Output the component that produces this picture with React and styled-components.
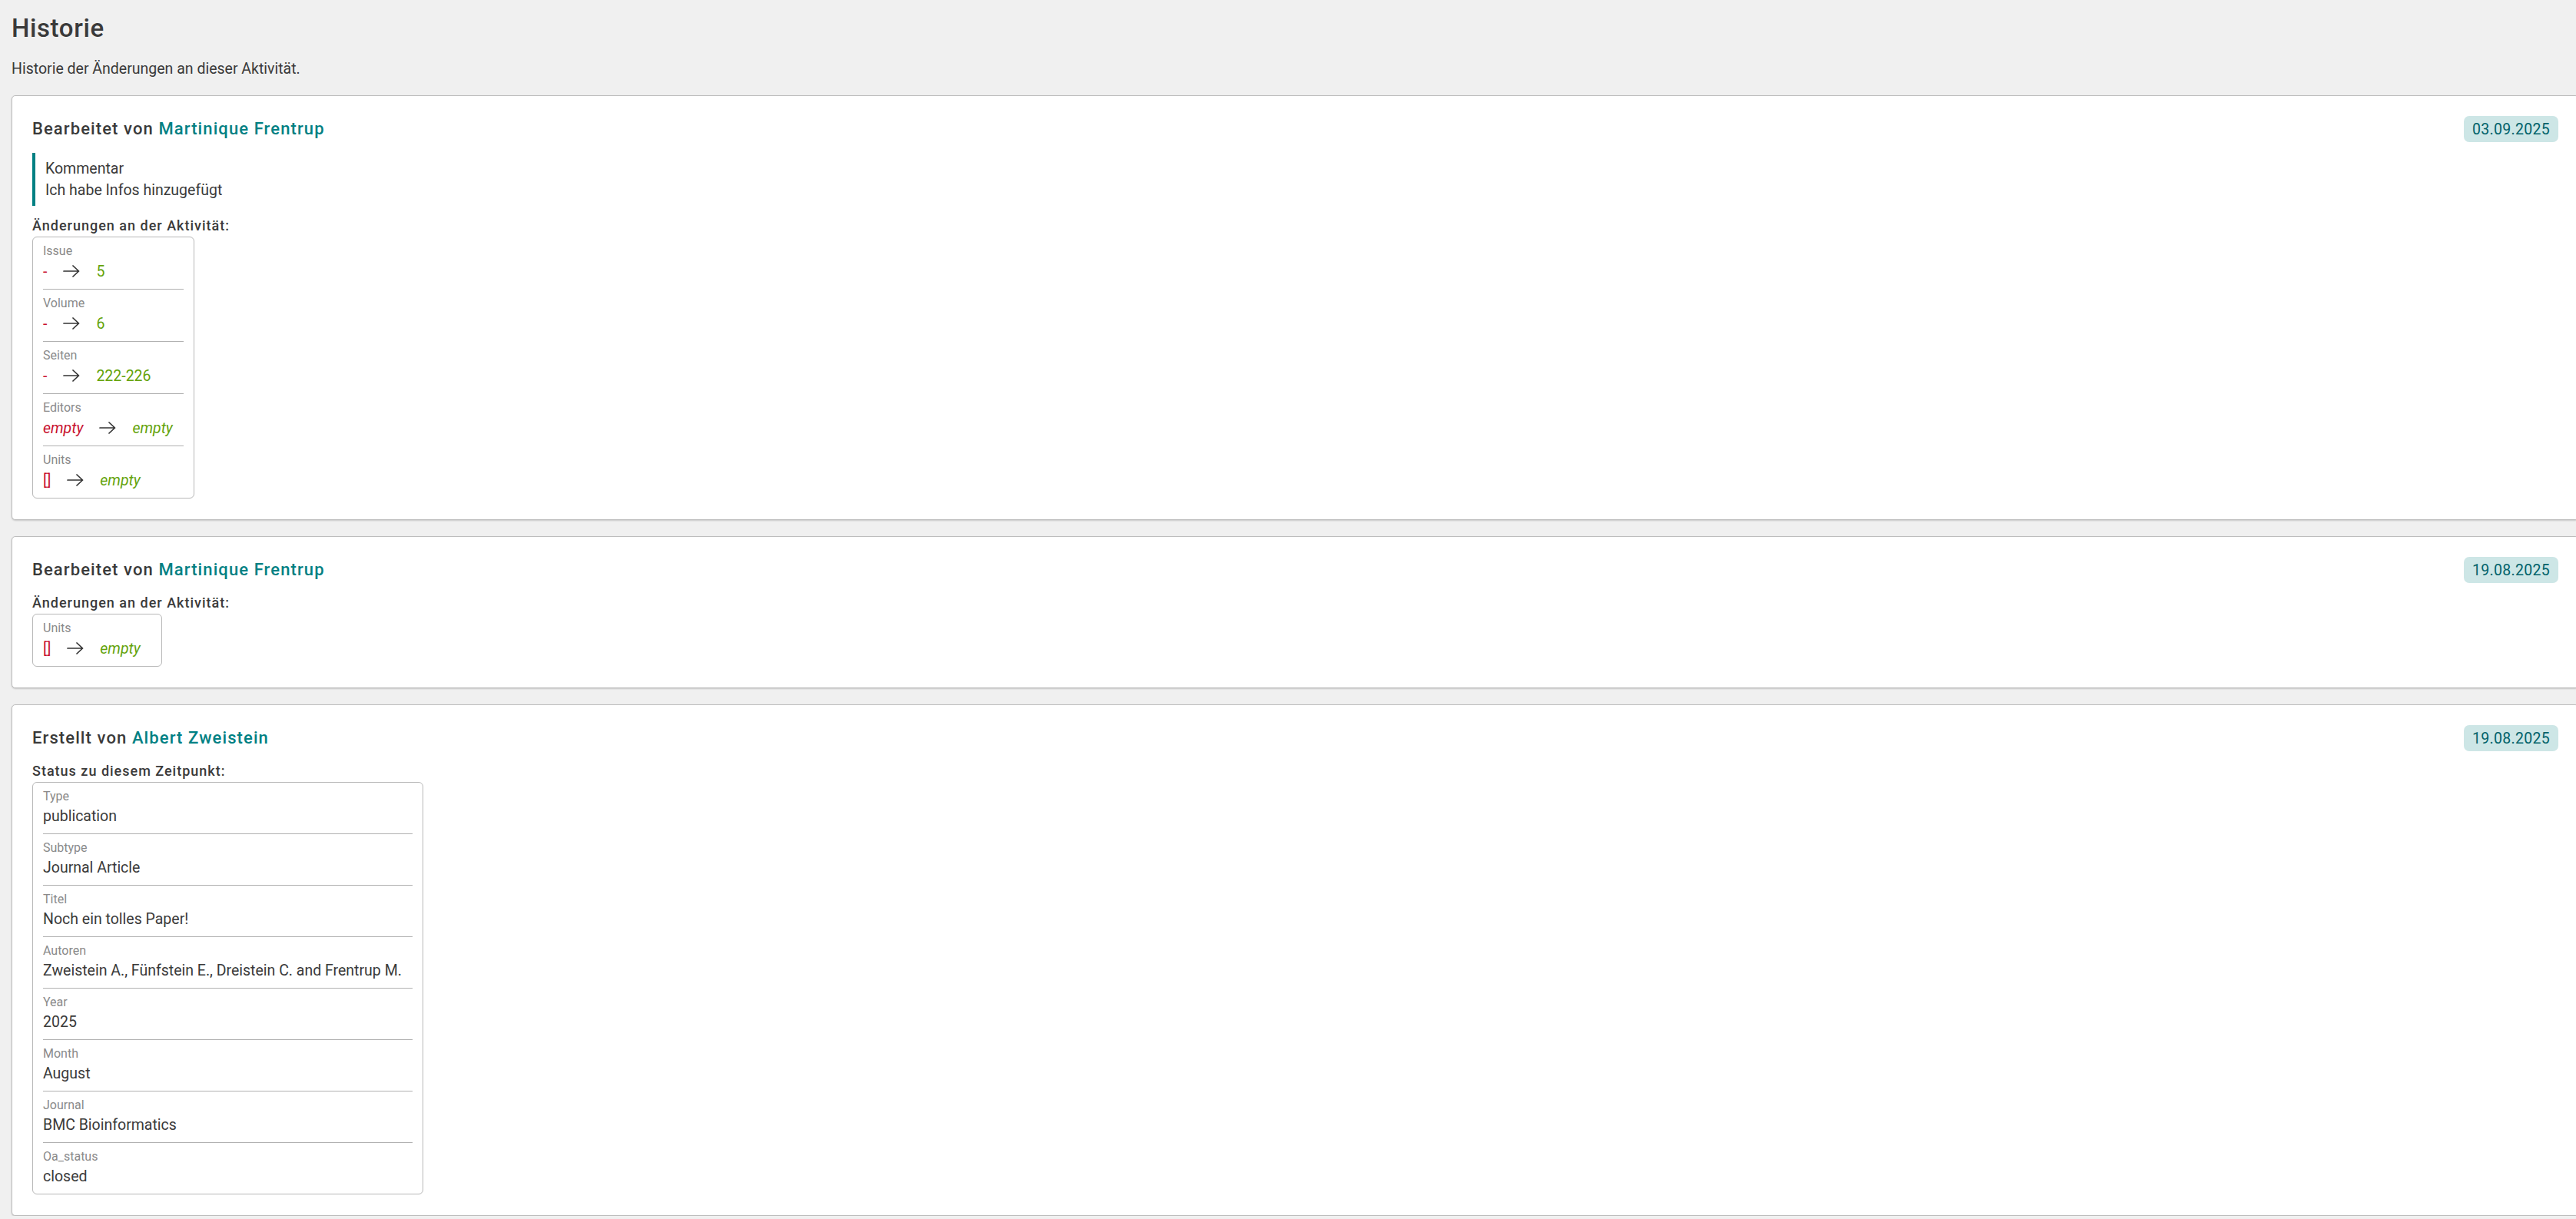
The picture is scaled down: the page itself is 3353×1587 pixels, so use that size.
import React from 'react';
import styled, { createGlobalStyle } from 'styled-components';

const GlobalStyle = createGlobalStyle`
  html, body {
    margin: 0;
    padding: 0;
    background: #f0f0f0;
    overflow-x: hidden;
  }
  body {
    font-family: Roboto, "Liberation Sans", sans-serif;
    color: #3a3a3a;
    font-size: 19.5px;
  }
`;

const history = [
  {
    id: 1,
    verb: 'Bearbeitet von',
    user: 'Martinique Frentrup',
    date: '03.09.2025',
    comment: 'Ich habe Infos hinzugefügt',
    heading: 'Änderungen an der Aktivität:',
    changes: [
      { label: 'Issue', from: '-', to: '5' },
      { label: 'Volume', from: '-', to: '6' },
      { label: 'Seiten', from: '-', to: '222-226' },
      { label: 'Editors', from: null, to: null },
      { label: 'Units', from: '[]', to: null },
    ],
  },
  {
    id: 2,
    verb: 'Bearbeitet von',
    user: 'Martinique Frentrup',
    date: '19.08.2025',
    heading: 'Änderungen an der Aktivität:',
    changes: [{ label: 'Units', from: '[]', to: null }],
  },
  {
    id: 3,
    verb: 'Erstellt von',
    user: 'Albert Zweistein',
    date: '19.08.2025',
    heading: 'Status zu diesem Zeitpunkt:',
    fields: [
      { label: 'Type', value: 'publication' },
      { label: 'Subtype', value: 'Journal Article' },
      { label: 'Titel', value: 'Noch ein tolles Paper!' },
      { label: 'Autoren', value: 'Zweistein A., Fünfstein E., Dreistein C. and Frentrup M.' },
      { label: 'Year', value: '2025' },
      { label: 'Month', value: 'August' },
      { label: 'Journal', value: 'BMC Bioinformatics' },
      { label: 'Oa_status', value: 'closed' },
    ],
  },
];

function Arrow() {
  return (
    <ArrowIcon viewBox="0 0 22 16" aria-hidden="true">
      <path d="M1 8H20.5M13 1l7.5 7-7.5 7" />
    </ArrowIcon>
  );
}

function Value({ value, tone }) {
  if (value === null) {
    return <ChangeValue $tone={tone} $empty>empty</ChangeValue>;
  }
  return <ChangeValue $tone={tone}>{value}</ChangeValue>;
}

function Entry({ entry }) {
  return (
    <Card>
      <CardHeader>
        <CardTitle>
          {entry.verb} <UserName>{entry.user}</UserName>
        </CardTitle>
        <DateBadge>{entry.date}</DateBadge>
      </CardHeader>
      {entry.comment && (
        <Comment>
          <div>Kommentar</div>
          <div>{entry.comment}</div>
        </Comment>
      )}
      <SectionLabel>{entry.heading}</SectionLabel>
      <FieldBox>
        {entry.changes &&
          entry.changes.map((c) => (
            <FieldRow key={c.label} $pad={9}>
              <FieldLabel>{c.label}</FieldLabel>
              <ChangeLine>
                <Value value={c.from} tone="old" />
                <Arrow />
                <Value value={c.to} tone="new" />
              </ChangeLine>
            </FieldRow>
          ))}
        {entry.fields &&
          entry.fields.map((f) => (
            <FieldRow key={f.label} $pad={8}>
              <FieldLabel>{f.label}</FieldLabel>
              <FieldValue>{f.value}</FieldValue>
            </FieldRow>
          ))}
      </FieldBox>
    </Card>
  );
}

export default function App() {
  return (
    <Page>
      <GlobalStyle />
      <PageTitle>Historie</PageTitle>
      <Intro>Historie der Änderungen an dieser Aktivität.</Intro>
      <Timeline>
        {history.map((entry) => (
          <Entry key={entry.id} entry={entry} />
        ))}
      </Timeline>
    </Page>
  );
}

const Page = styled.div`
  padding: 18px 0 0 15px;
`;

const PageTitle = styled.h1`
  margin: 0;
  font-size: 33px;
  line-height: 38px;
  font-weight: 500;
  letter-spacing: 0.6px;
  color: #3a3a3a;
`;

const Intro = styled.p`
  margin: 20px 0 0;
  font-size: 19.5px;
  line-height: 28px;
`;

const Timeline = styled.div`
  display: flex;
  flex-direction: column;
  gap: 21px;
  margin-top: 20px;
`;

const Card = styled.section`
  display: flex;
  flex-direction: column;
  align-items: flex-start;
  margin-right: -4px;
  padding: 26px 26px 27px 26px;
  background: #fff;
  border: 1px solid #bdbdbd;
  border-radius: 5px;
  box-shadow: 0 1px 2px rgba(0, 0, 0, 0.18);
`;

const CardHeader = styled.div`
  display: flex;
  align-items: center;
  justify-content: space-between;
  align-self: stretch;
`;

const CardTitle = styled.h3`
  margin: 0;
  font-size: 22px;
  line-height: 30px;
  font-weight: 500;
  letter-spacing: 1.1px;
  color: #3a3a3a;
`;

const UserName = styled.span`
  color: #008083;
`;

const DateBadge = styled.span`
  display: inline-flex;
  align-items: center;
  height: 34px;
  padding: 0 11px;
  border-radius: 7px;
  background: #cde6e6;
  color: #00626a;
  font-size: 19.5px;
  letter-spacing: 0.3px;
`;

const Comment = styled.blockquote`
  margin: 14px 0 0;
  padding: 7px 13px 6px;
  border-left: 4px solid #008083;
  line-height: 28px;
`;

const SectionLabel = styled.h4`
  margin: 15px 0 3px;
  font-size: 18px;
  line-height: 22px;
  font-weight: 500;
  letter-spacing: 1px;
  color: #3a3a3a;
`;

const FieldBox = styled.div`
  display: flex;
  flex-direction: column;
  padding: 0 13px;
  border: 1px solid #b8b8b8;
  border-radius: 6px;
`;

const FieldRow = styled.div`
  padding: 8px 14px ${(p) => p.$pad}px 0;
  border-bottom: 1px solid #b0b0b0;

  &:last-child {
    border-bottom: none;
  }
`;

const FieldLabel = styled.div`
  font-size: 16px;
  line-height: 20px;
  color: #8a8a8a;
  margin-bottom: 2px;
`;

const FieldValue = styled.div`
  font-size: 19.5px;
  line-height: 28px;
  color: #3a3a3a;
`;

const ChangeLine = styled.div`
  display: flex;
  align-items: center;
  gap: 21px;
  height: 28px;
  font-size: 19.5px;
`;

const ChangeValue = styled.span`
  color: ${(p) => (p.$tone === 'old' ? '#c8102e' : '#64a30a')};
  font-style: ${(p) => (p.$empty ? 'italic' : 'normal')};
`;

const ArrowIcon = styled.svg`
  width: 22px;
  height: 16px;
  flex-shrink: 0;
  fill: none;
  stroke: #333;
  stroke-width: 1.7;
  stroke-linecap: round;
  stroke-linejoin: round;
`;
